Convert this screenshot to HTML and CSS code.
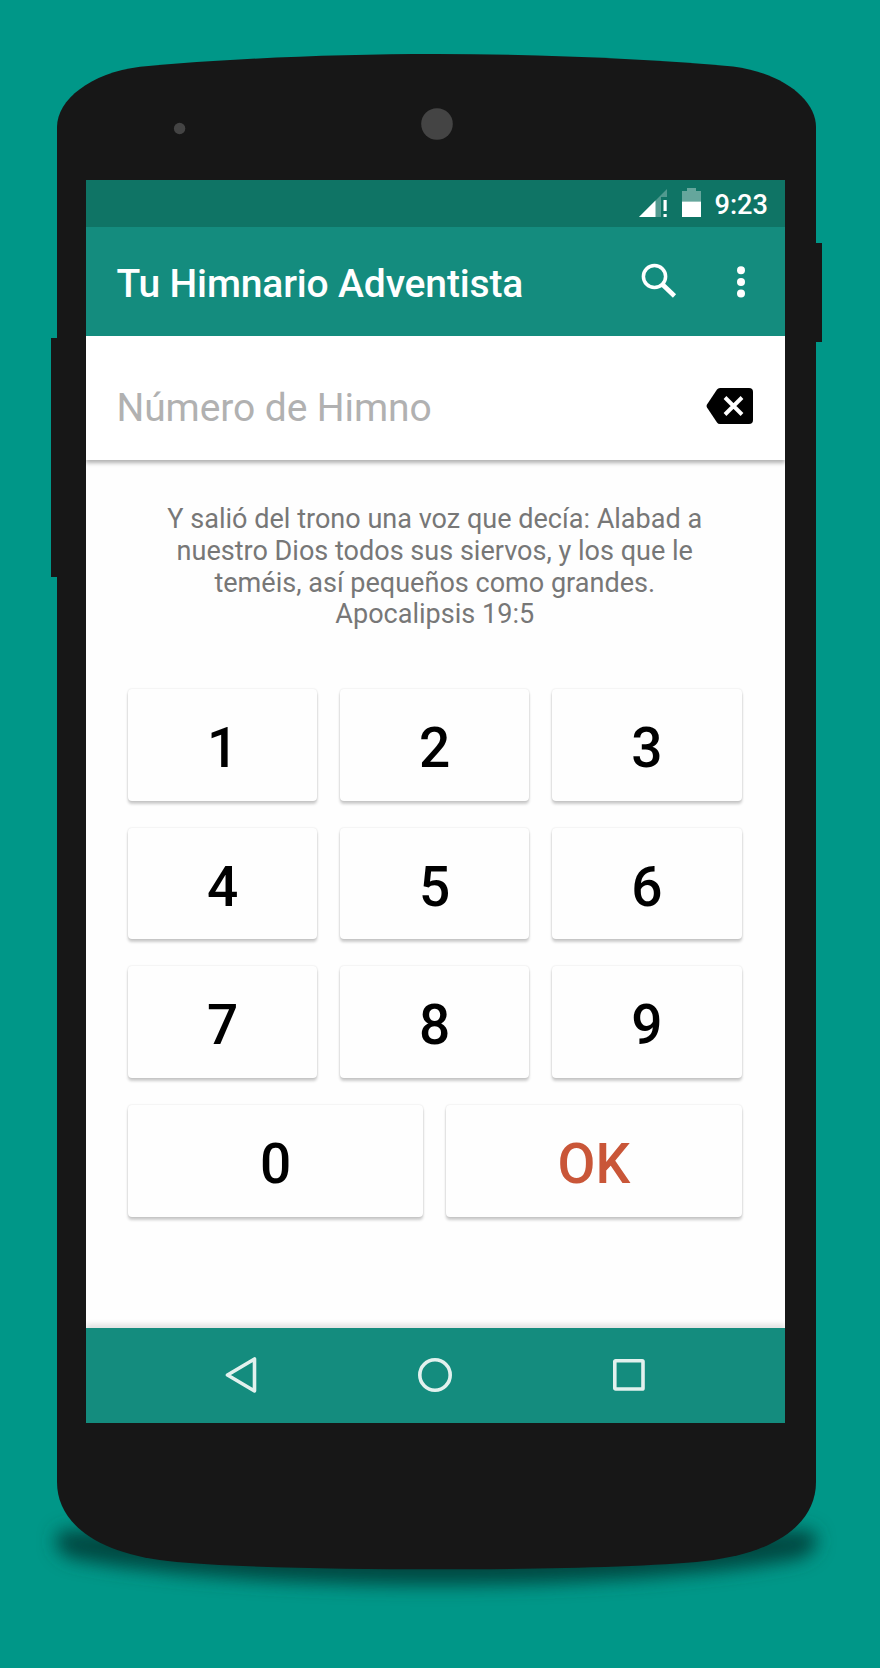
FILE: index.html
```
<!DOCTYPE html>
<html lang="es">
<head>
<meta charset="utf-8">
<title>Tu Himnario Adventista</title>
<link rel="stylesheet" href="styles.css">
</head>
<body>
<div class="stage">
  <svg class="phone" viewBox="0 0 880 1668" aria-hidden="true">
    <defs>
      <filter id="soft" x="-10%" y="-60%" width="120%" height="240%"><feGaussianBlur stdDeviation="9"/></filter>
    </defs>
    <path d="M62 1530H811Q826 1545 802 1558C720 1575 570 1585 436 1585S150 1575 70 1558Q46 1545 62 1530Z" fill="#004a42" filter="url(#soft)"/>
    <path d="M51 338H60V577H51ZM813 243H822V342H813Z" fill="#171717"/>
    <path d="M57 127C57 100 90 73 140 66.700C230 58.500 335 54 436 54S645 58.500 733 66.500C783 73 816 100 816 127V1482C816 1522 778 1553 705 1561C645 1567.500 530 1569.300 436 1569.300S228 1567.500 168 1561C95 1553 57 1522 57 1482Z" fill="#171717"/>
    <circle cx="179.600" cy="128.500" r="5.700" fill="#444"/>
    <circle cx="437" cy="124" r="15.800" fill="#444"/>
  </svg>
  <main class="screen">
    <div class="status">
      <svg class="signal" viewBox="0 0 28 28"><path d="M0 28 28 0V8H22V28Z" fill="#fff" fill-opacity=".28"/><path d="M0 28 16.500 11.500V28Z" fill="#fff"/><path d="M24.500 11H27.700V22H24.500ZM24.500 25H27.700V28H24.500Z" fill="#fff"/></svg>
      <svg class="battery" viewBox="0 0 19 29"><path d="M0 13.500V3H5V0H14V3H19V13.500Z" fill="#fff" fill-opacity=".36"/><path d="M0 13.500H19V29H0Z" fill="#fff"/></svg>
      <span class="time">9:23</span>
    </div>
    <header class="appbar">
      <h1 class="title">Tu Himnario Adventista</h1>
      <svg class="search" viewBox="0 0 36 36" fill="none" stroke="#fff"><circle cx="13.500" cy="13.500" r="11.100" stroke-width="3.500"/><path d="M22 22 33.500 33" stroke-width="4.600"/></svg>
      <svg class="more" viewBox="0 0 8 32" fill="#fff"><circle cx="4" cy="4.200" r="4"/><circle cx="4" cy="15.900" r="4"/><circle cx="4" cy="27.500" r="4"/></svg>
    </header>
    <div class="entry">
      <span class="hint">Número de Himno</span>
      <svg class="erase" viewBox="0 0 47 36"><path d="M14 0H43Q47 0 47 4V32Q47 36 43 36H14Q12 36 11 34.500L1 19.500Q0 18 1 16.500L11 1.500Q12 0 14 0Z" fill="#000"/><path d="M19 9.500 36 26.500M36 9.500 19 26.500" stroke="#fff" stroke-width="3.900"/></svg>
    </div>
    <p class="verse">Y salió del trono una voz que decía: Alabad a<br>nuestro Dios todos sus siervos, y los que le<br>teméis, así pequeños como grandes.<br>Apocalipsis 19:5</p>
    <div class="keypad">
      <button class="key">1</button><button class="key">2</button><button class="key">3</button>
      <button class="key">4</button><button class="key">5</button><button class="key">6</button>
      <button class="key">7</button><button class="key">8</button><button class="key">9</button>
      <button class="key wide">0</button><button class="key wide ok">OK</button>
    </div>
    <nav class="navbar">
      <svg class="back" viewBox="0 0 32 36"><path d="M29.500 2V34L2.500 18Z"/></svg>
      <svg class="home" viewBox="0 0 34 34"><circle cx="17" cy="17" r="15.200"/></svg>
      <svg class="recent" viewBox="0 0 32 32"><rect x="1.800" y="1.800" width="28.200" height="28.200" rx=".8"/></svg>
    </nav>
  </main>
</div>
</body>
</html>
```
FILE: styles.css
```
body {
  margin: 0;
  background: #009788;
  font-family: Roboto, "Liberation Sans", sans-serif;
}
.stage {
  position: relative;
  box-sizing: border-box;
  width: 880px;
  height: 1668px;
  padding: 180px 95px 0 85.5px;
  overflow: hidden;
}
/* handset silhouette, behind the screen */
.phone {
  position: absolute;
  inset: 0;
  width: 880px;
  height: 1668px;
}
.screen {
  position: relative;
  display: flex;
  flex-direction: column;
  height: 1243px;
  background: #fefefe;
}
.status {
  display: flex;
  align-items: flex-start;
  box-sizing: border-box;
  height: 47px;
  padding: 8px 17px 0 0;
  justify-content: flex-end;
  background: #0f7465;
}
.signal { width: 28px; height: 28px; margin: 1px 15px 0 0; }
.battery { width: 19px; height: 29px; margin-right: 13.500px; }
.time {
  padding-top: 1px;
  color: #fff;
  font-size: 27.200px;
  font-weight: 500;
  line-height: 32px;
}
.appbar {
  display: flex;
  align-items: center;
  box-sizing: border-box;
  height: 109px;
  padding: 0 40px 0 31px;
  background: #148c7e;
}
.title {
  flex: 1;
  margin: 0;
  padding-top: 5px;
  color: #fff;
  font-size: 39px;
  font-weight: 500;
  line-height: 46px;
  letter-spacing: -.15px;
  white-space: nowrap;
}
.search { width: 36px; height: 36px; margin: 0 60px 1px 0; }
.more { width: 8px; height: 32px; }
.entry {
  display: flex;
  align-items: center;
  justify-content: space-between;
  box-sizing: border-box;
  height: 124px;
  padding: 15px 32px 0 31px;
  background: #fff;
  box-shadow: 0 3px 4px rgba(0, 0, 0, .3);
  clip-path: inset(0 0 -10px 0);
}
.hint { padding-top: 5px; color: #b1b1b1; font-size: 39px; line-height: 46px; letter-spacing: -.1px; }
.erase { width: 47px; height: 36px; }
.verse {
  margin: 44px 1px 0 0;
  color: #777;
  font-size: 27.050px;
  line-height: 31.800px;
  text-align: center;
  white-space: nowrap;
}
.keypad {
  display: grid;
  grid-template-columns: repeat(6, 1fr);
  grid-auto-rows: 111.700px;
  gap: 27px 23px;
  margin: 57.800px 43.500px 0 42.500px;
}
.key {
  grid-column: span 2;
  margin: 0;
  padding: 6px 0 0;
  border: 0;
  border-radius: 4px;
  background: #fefefe;
  color: #000;
  font: 500 55px Roboto, "Liberation Sans", sans-serif;
  box-shadow: 0 3px 3px rgba(0, 0, 0, .2), 0 0 2px rgba(0, 0, 0, .14);
}
.wide { grid-column: span 3; }
.ok { color: #c95638; }
.navbar {
  display: flex;
  align-items: center;
  box-sizing: border-box;
  height: 95px;
  margin-top: auto;
  padding: 0 0 1px 139px;
  background: #148c7e;
  box-shadow: 0 -4px 5px rgba(0, 0, 0, .11);
  clip-path: inset(-12px 0 0 0);
}
.navbar svg {
  fill: none;
  stroke: #e2f1ee;
  stroke-width: 3.600;
  stroke-linejoin: round;
}
.back { width: 32px; height: 36px; margin-right: 161px; }
.home { width: 34px; height: 34px; margin-right: 161px; }
.recent { width: 32px; height: 32px; }
```
